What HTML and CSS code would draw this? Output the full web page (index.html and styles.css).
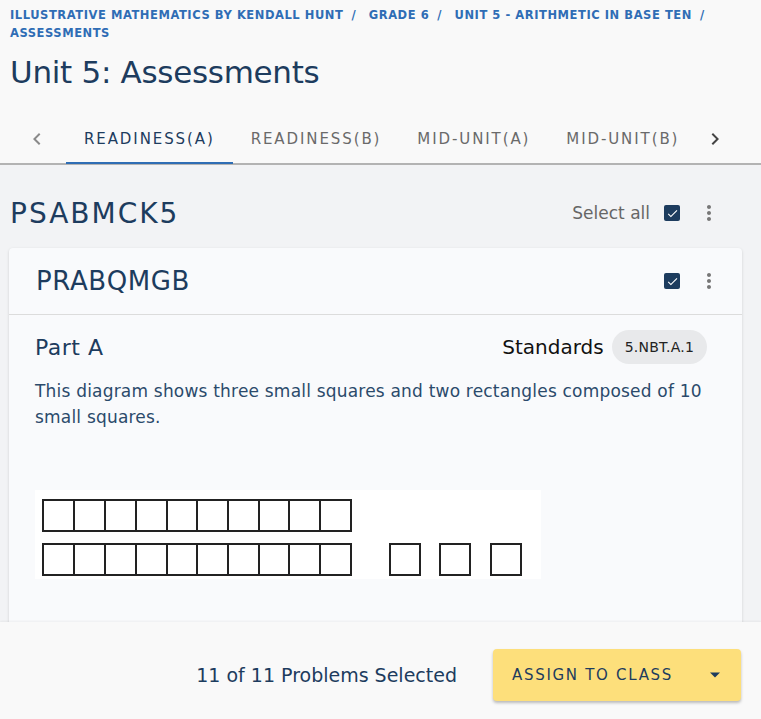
FILE: index.html
```html
<!DOCTYPE html>
<html lang="en">
<head>
    <meta charset="UTF-8">
    <meta name="viewport" content="width=device-width, initial-scale=1.0">
    <title>Unit 5: Assessments</title>
    <link rel="stylesheet" href="styles.css">
</head>
<body>
    <div class="page">
        <!-- Header -->
        <header class="top">
            <nav class="crumbs">
                <a href="#">Illustrative Mathematics by Kendall Hunt</a><span class="sep">/</span>
                <a href="#">Grade 6</a><span class="sep">/</span>
                <a href="#">Unit 5 - Arithmetic in Base Ten</a><span class="sep">/</span>
                <a href="#">Assessments</a>
            </nav>
            <h1 class="title">Unit 5: Assessments</h1>

            <div class="tabs">
                <button class="arrow">
                    <svg width="24" height="24" viewBox="0 0 24 24"><path d="M15.41 7.41 14 6l-6 6 6 6 1.41-1.41L10.83 12z" fill="#8a8a8a"/></svg>
                </button>
                <a class="tab active" href="#">Readiness(A)</a>
                <a class="tab" href="#">Readiness(B)</a>
                <a class="tab" href="#">Mid-Unit(A)</a>
                <a class="tab" href="#">Mid-Unit(B)</a>
                <button class="arrow next">
                    <svg width="24" height="24" viewBox="0 0 24 24"><path d="M10 6 8.59 7.41 13.17 12l-4.58 4.59L10 18l6-6z" fill="#444"/></svg>
                </button>
            </div>
        </header>

        <!-- Problem set -->
        <main class="content">
            <div class="set-head">
                <h2>PSABMCK5</h2>
                <div class="set-tools">
                    <span class="select-all">Select all</span>
                    <span class="check"><svg width="13" height="13" viewBox="0 0 24 24"><path d="M9 16.2 4.8 12l-1.4 1.4L9 19 21 7l-1.4-1.4z" fill="#fff"/></svg></span>
                    <span class="kebab"><svg width="24" height="24" viewBox="0 0 24 24"><path d="M12 8c1.1 0 2-.9 2-2s-.9-2-2-2-2 .9-2 2 .9 2 2 2zm0 2c-1.1 0-2 .9-2 2s.9 2 2 2 2-.9 2-2-.9-2-2-2zm0 6c-1.1 0-2 .9-2 2s.9 2 2 2 2-.9 2-2-.9-2-2-2z" fill="#777"/></svg></span>
                </div>
            </div>

            <div class="card">
                <div class="card-head">
                    <h3>PRABQMGB</h3>
                    <div class="set-tools">
                        <span class="check"><svg width="13" height="13" viewBox="0 0 24 24"><path d="M9 16.2 4.8 12l-1.4 1.4L9 19 21 7l-1.4-1.4z" fill="#fff"/></svg></span>
                        <span class="kebab"><svg width="24" height="24" viewBox="0 0 24 24"><path d="M12 8c1.1 0 2-.9 2-2s-.9-2-2-2-2 .9-2 2 .9 2 2 2zm0 2c-1.1 0-2 .9-2 2s.9 2 2 2 2-.9 2-2-.9-2-2-2zm0 6c-1.1 0-2 .9-2 2s.9 2 2 2 2-.9 2-2-.9-2-2-2z" fill="#777"/></svg></span>
                    </div>
                </div>
                <div class="card-body">
                    <div class="part-row">
                        <h4>Part A</h4>
                        <div class="standards">
                            <span>Standards</span>
                            <span class="chip">5.NBT.A.1</span>
                        </div>
                    </div>
                    <p class="prompt">This diagram shows three small squares and two rectangles composed of 10 small squares.</p>

                    <svg class="diagram" width="506" height="89" viewBox="0 0 506 89">
                        <rect width="506" height="89" fill="#fff"/>
                        <g fill="none" stroke="#222" stroke-width="2">
                            <rect x="8" y="10" width="308" height="31"/>
                            <path d="M39 10v31M70 10v31M101 10v31M132 10v31M162 10v31M193 10v31M224 10v31M254 10v31M285 10v31"/>
                            <rect x="8" y="54" width="308" height="31"/>
                            <path d="M39 54v31M70 54v31M101 54v31M132 54v31M162 54v31M193 54v31M224 54v31M254 54v31M285 54v31"/>
                            <rect x="355" y="54" width="30" height="31"/>
                            <rect x="405" y="54" width="30" height="31"/>
                            <rect x="456" y="54" width="30" height="31"/>
                        </g>
                    </svg>
                </div>
            </div>
        </main>

        <!-- Footer bar -->
        <footer class="bottom">
            <span class="count">11 of 11 Problems Selected</span>
            <button class="assign">
                <span>Assign to class</span>
                <svg width="10" height="6" viewBox="0 0 10 5"><path d="M0 0h10L5 5z" fill="#1d3c5e"/></svg>
            </button>
        </footer>
    </div>
</body>
</html>
```
FILE: styles.css
```css
body {
    margin: 0;
    font-family: "DejaVu Sans", Verdana, sans-serif;
    background-color: #f2f3f5;
    color: #1d3c5e;
}

.page {
    height: 100vh;
    display: flex;
    flex-direction: column;
    overflow: hidden;
}

/* header */
.top {
    background-color: #f9f9f9;
    border-bottom: 2px solid #b3b3b3;
}

.crumbs {
    padding: 6px 10px 0 10px;
    font-size: 11.5px;
    font-weight: 700;
    line-height: 18px;
    letter-spacing: 0.55px;
    text-transform: uppercase;
}

.crumbs a {
    color: #2f6db5;
    text-decoration: none;
}

.crumbs .sep {
    color: #2f6db5;
    margin: 0 8px;
}

.title {
    margin: 10px 0 0 10px;
    font-size: 31px;
    font-weight: 400;
    line-height: 40px;
    color: #1d3c5e;
    letter-spacing: -0.3px;
}

.tabs {
    display: flex;
    align-items: center;
    height: 49px;
    margin-top: 22px;
    padding-left: 25px;
}

.arrow {
    border: none;
    background: none;
    padding: 0;
    width: 24px;
    height: 24px;
    margin-right: 17px;
    cursor: pointer;
}

.arrow.next {
    margin-left: 6px;
}

.tab {
    height: 100%;
    display: flex;
    align-items: center;
    padding: 0 18px;
    font-size: 15px;
    letter-spacing: 1.9px;
    text-transform: uppercase;
    color: #6a6a6a;
    text-decoration: none;
    box-sizing: border-box;
    border-bottom: 2px solid transparent;
    margin-bottom: -2px;
}

.tab.active {
    color: #1d3c5e;
    border-bottom-color: #2e6db4;
}

/* content */
.content {
    flex: 1;
    overflow: hidden;
    padding: 0 19px 0 9px;
}

.set-head {
    display: flex;
    align-items: center;
    justify-content: space-between;
    height: 46px;
    margin-top: 25px;
    margin-bottom: 12px;
}

.set-head h2 {
    margin: 0 0 0 1px;
    font-size: 28px;
    font-weight: 400;
    letter-spacing: 2px;
}

.set-tools {
    display: flex;
    align-items: center;
}

.select-all {
    font-size: 17px;
    color: #666;
    margin-right: 14px;
}

.check {
    width: 16px;
    height: 16px;
    border-radius: 2px;
    background-color: #1d3c5e;
    display: flex;
    align-items: center;
    justify-content: center;
}

.kebab {
    width: 24px;
    height: 24px;
    margin-left: 17px;
    margin-right: 21px;
}

.card {
    background-color: #f9fafc;
    border-radius: 4px;
    box-shadow: 0 1px 3px rgba(0, 0, 0, 0.15);
}

.card-head {
    display: flex;
    align-items: center;
    justify-content: space-between;
    height: 66px;
    padding-left: 27px;
    border-bottom: 1px solid #dcdcdc;
}

.card-head h3 {
    margin: 0;
    font-size: 26px;
    font-weight: 400;
    letter-spacing: 0.6px;
}

.card-body {
    padding: 15px 26px 120px 26px;
}

.part-row {
    display: flex;
    align-items: center;
    justify-content: space-between;
}

.part-row h4 {
    margin: 0;
    font-size: 22px;
    font-weight: 400;
    letter-spacing: 0.5px;
}

.standards {
    display: flex;
    align-items: center;
    font-size: 20px;
    color: #111;
    margin-right: 9px;
}

.chip {
    margin-left: 8px;
    background-color: #e8e9eb;
    border-radius: 17px;
    height: 34px;
    padding: 0 13px;
    display: flex;
    align-items: center;
    font-size: 14px;
    font-weight: 400;
    color: #222;
    letter-spacing: 0.2px;
}

.prompt {
    margin: 14px 0 0 0;
    font-size: 17px;
    line-height: 26px;
    letter-spacing: 0.2px;
    color: #2b4a6b;
}

.diagram {
    display: block;
    margin-top: 60px;
}

/* footer */
.bottom {
    height: 97px;
    box-sizing: border-box;
    flex-shrink: 0;
    background-color: #f9f9f9;
    box-shadow: 0 -1px 2px rgba(0, 0, 0, 0.05);
    display: flex;
    align-items: center;
    justify-content: flex-end;
    padding: 9px 20px 0 0;
}

.count {
    font-size: 19px;
    margin-right: 36px;
}

.assign {
    width: 248px;
    height: 52px;
    border: none;
    border-radius: 4px;
    background-color: #fddf7b;
    box-shadow: 0 2px 3px rgba(0, 0, 0, 0.25);
    display: flex;
    align-items: center;
    justify-content: space-between;
    padding: 0 21px 0 19px;
    font-family: inherit;
    font-size: 15px;
    letter-spacing: 1.7px;
    text-transform: uppercase;
    color: #1d3c5e;
    cursor: pointer;
}
```
